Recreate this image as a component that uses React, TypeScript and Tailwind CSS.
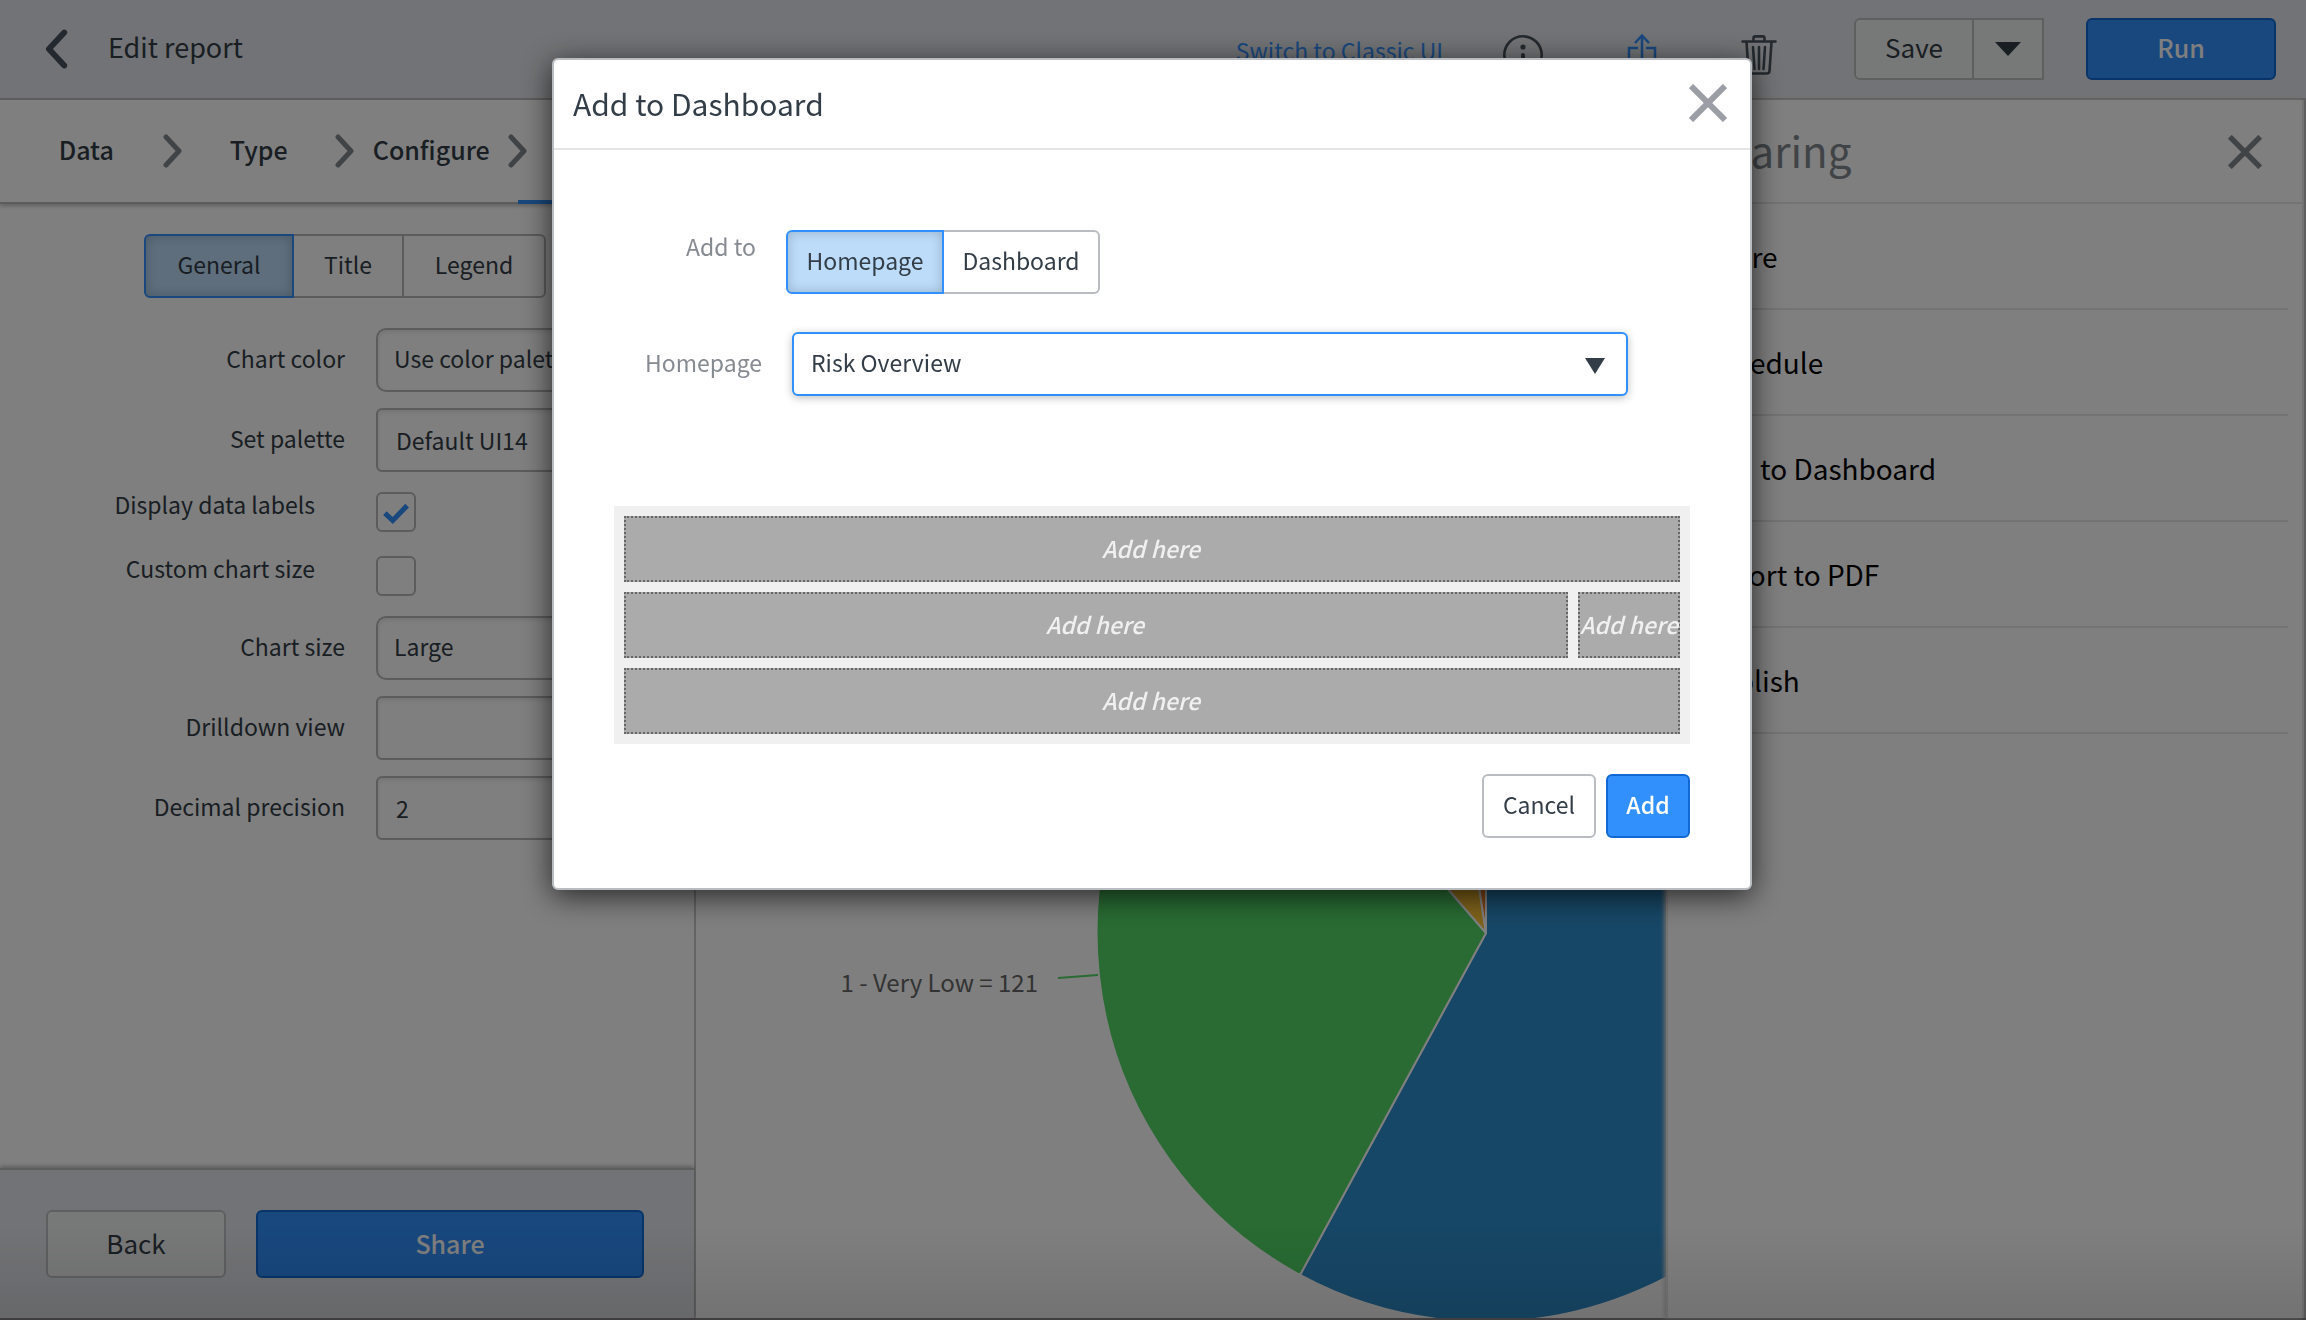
import React from "react";

function Chevron({ dir, className }: { dir: "left" | "right"; className: string }) {
  return (
    <svg viewBox="0 0 20 34" className={className} fill="none" stroke="currentColor" strokeWidth="5" strokeLinecap="round" strokeLinejoin="round" aria-hidden="true">
      <path d={dir === "left" ? "M17 3L4 17l13 14" : "M3 3l13 14L3 31"} />
    </svg>
  );
}

function Cross({ className }: { className: string }) {
  return (
    <svg viewBox="0 0 38 38" className={className} fill="none" stroke="currentColor" strokeWidth="6" aria-hidden="true">
      <path d="M2 2l34 34M36 2L2 36" />
    </svg>
  );
}

function Header() {
  return (
    <header className="flex h-[100px] shrink-0 items-center border-b-2 border-[#bebebe] bg-[#e5e7ec] pr-[30px] pl-11">
      <button aria-label="Go back" className="text-[#48535e]">
        <Chevron dir="left" className="h-10 w-6" />
      </button>
      <h1 className="ml-10 flex-1 pb-1 text-[27px]">Edit report</h1>
      <a href="#classic" className="pt-0.5 text-[#3290fc]">Switch to Classic UI</a>
      <button aria-label="Information" className="mt-3 ml-[60px] text-[#48535e]">
        <svg viewBox="0 0 40 40" className="size-10" fill="none" stroke="currentColor" strokeWidth="2.6">
          <circle cx="20" cy="20" r="18.7" />
          <circle cx="20" cy="12" r="2.600" fill="currentColor" stroke="none" />
          <path d="M20 20v11" strokeWidth="4" strokeLinecap="round" />
        </svg>
      </button>
      <button aria-label="Share" className="mt-2 ml-[84px] text-[#3290fc]">
        <svg viewBox="0 0 30 38" className="h-[38px] w-[30px]" fill="none" stroke="currentColor" strokeWidth="2.500">
          <path d="M11 14H2v22h26V14h-9M15 24V2M8 9l7-7.500L22 9" />
        </svg>
      </button>
      <button aria-label="Delete" className="mt-3 ml-[84px] text-[#48535e]">
        <svg viewBox="0 0 36 40" className="h-10 w-9" fill="none" stroke="currentColor" strokeWidth="2.600" strokeLinecap="round">
          <path d="M1.500 6.500h33M12.500 6V3.200c0-1 .8-1.800 1.800-1.800h7.400c1 0 1.800.8 1.800 1.800V6M5.500 7l2 29c.1 1.600 1.200 2.500 2.600 2.500h15.800c1.400 0 2.500-.9 2.600-2.500l2-29" />
          <path d="M12 12l1.500 22M18 12v22M24 12l-1.500 22" />
        </svg>
      </button>
      <div className="ml-[77px] flex h-[62px] w-[190px] rounded-l-md border-2 border-[#bebfc1] bg-[#eff1f0]">
        <button className="flex-1 border-r-2 border-[#bebfc1] pb-1 text-[26px]">Save</button>
        <button aria-label="More save options" className="flex w-[68px] items-center justify-center">
          <svg viewBox="0 0 26 14" className="h-3.5 w-[26px]" fill="currentColor"><path d="M0 0h26L13 14z" /></svg>
        </button>
      </div>
      <button className="ml-[42px] h-[62px] w-[190px] rounded-md border-2 border-[#1269d3] bg-[#3290fc] pb-1 text-[25px] font-medium text-white">Run</button>
    </header>
  );
}

const steps = ["Data", "Type", "Configure", "Style"];

function Steps() {
  return (
    <nav className="z-10 flex h-[104px] shrink-0 items-stretch border-b-2 border-[#b8b8b8] pr-1 text-[25px] font-medium shadow-[0_2px_4px_rgba(0,0,0,0.25)]">
      {steps.map((s, i) => (
        <React.Fragment key={s}>
          {i > 0 && (
            <span className="z-10 -mx-2.5 flex w-5 items-center text-[#82888e]">
              <Chevron dir="right" className="h-[34px] w-5" />
            </span>
          )}
          <a href={"#" + s.toLowerCase()} className={i === 3 ? "-mb-0.5 flex flex-1 items-center justify-center border-b-4 border-[#3290fc]" : "flex flex-1 items-center justify-center pb-1"}>
            {s}
          </a>
        </React.Fragment>
      ))}
    </nav>
  );
}

type FieldProps = { id: string; label: string; value: string; round?: boolean };

function Field({ id, label, value, round }: FieldProps) {
  return (
    <div className="mb-4 flex h-16 items-center">
      <label htmlFor={id} className="w-[345px] pb-1 text-right">{label}</label>
      <select id={id} defaultValue={value} className={"ml-[31px] h-16 w-[260px] appearance-none border-2 border-[#b8b8b8] bg-white shadow-[inset_0_2px_4px_rgba(0,0,0,0.1)] " + (round ? "rounded-[10px] px-4 pb-1" : "rounded-md px-[18px]")}>
        <option>{value}</option>
      </select>
    </div>
  );
}

function CheckField({ id, label, checked }: { id: string; label: string; checked: boolean }) {
  return (
    <div className="flex h-16 items-start pt-1">
      <label htmlFor={id} className="w-[315px] text-right leading-6">{label}</label>
      <span className="relative ml-[61px] size-10">
        <input id={id} type="checkbox" defaultChecked={checked} className="peer size-10 appearance-none rounded-md border-2 border-[#b8b8b8] bg-white" />
        <svg viewBox="0 0 28 22" className="pointer-events-none absolute inset-x-[7px] top-[11px] hidden h-[22px] w-[26px] peer-checked:block" fill="none" stroke="#3290fc" strokeWidth="5.500">
          <path d="M2 10l8.500 8L26 2" />
        </svg>
      </span>
    </div>
  );
}

function Sidebar() {
  return (
    <aside className="flex w-[696px] shrink-0 flex-col border-r-2 border-[#c8c8c8] bg-white">
      <Steps />
      <div className="flex-1">
        <div className="mt-[30px] ml-36 flex h-16 w-[402px]">
          <button aria-pressed="true" className="w-[150px] rounded-l-md border-2 border-[#3290fc] bg-[#bcdcfa] pb-1 shadow-[inset_0_0_12px_rgba(0,0,0,0.2)]">General</button>
          <button className="w-[108px] border-y-2 border-[#b8b8b8] pb-1">Title</button>
          <button className="flex-1 rounded-r-md border-2 border-[#b8b8b8] pb-1">Legend</button>
        </div>
        <form className="pt-[30px]">
          <Field id="chart-color" label="Chart color" value="Use color palette" round />
          <Field id="palette" label="Set palette" value="Default UI14" />
          <CheckField id="data-labels" label="Display data labels" checked />
          <CheckField id="custom-size" label="Custom chart size" checked={false} />
          <Field id="chart-size" label="Chart size" value="Large" round />
          <Field id="drilldown" label="Drilldown view" value="" />
          <Field id="precision" label="Decimal precision" value="2" />
        </form>
      </div>
      <div className="flex h-[150px] items-center gap-[30px] border-t-2 border-[#bababa] bg-[#e5e7ec] pr-[50px] pl-[46px] text-[26px] shadow-[0_-2px_4px_rgba(0,0,0,0.25)]">
        <button className="h-[68px] w-[180px] rounded-md border-2 border-[#bebfc1] bg-[#eff1f0] pb-0.5">Back</button>
        <button className="h-[68px] flex-1 rounded-md border-2 border-[#1269d3] bg-[#3290fc] pb-0.5 text-[25px] font-medium text-white">Share</button>
      </div>
    </aside>
  );
}

function Chart() {
  return (
    <main className="min-w-0 flex-1 overflow-hidden bg-white">
      <svg viewBox="0 0 970 1218" preserveAspectRatio="xMidYMin slice" className="h-full w-full" role="img" aria-label="Risk pie chart">
        <g stroke="#fff" strokeWidth="2" strokeLinejoin="round">
          <path d="M790 833V444A389 389 0 1 1 604 1175z" fill="#2e8ecc" />
          <path d="M790 833L604 1175A389 389 0 0 1 535 539z" fill="#52d666" />
          <path d="M790 833L535 539A389 389 0 0 1 732 448z" fill="#fec436" />
          <path d="M790 833L732 448A389 389 0 0 1 790 444z" fill="#fe8828" />
        </g>
        <path d="M362 878l40-3" stroke="#52d666" strokeWidth="2" />
        <text x="342" y="892" textAnchor="end" fontSize="24" fill="#666">1 - Very Low = 121</text>
      </svg>
    </main>
  );
}

const actions = ["Share", "Schedule", "Add to Dashboard", "Export to PDF", "Publish"];

function Sharing() {
  return (
    <aside className="z-10 mr-0.5 flex w-[638px] shrink-0 flex-col border-x-2 border-[#e6e6e6] bg-white shadow-[-2px_0_4px_#d8d8d8]">
      <div className="flex h-[104px] items-center justify-between border-b-2 border-[#e6e6e6] pt-0.5 pr-10 pl-8 text-[#82888e]">
        <h2 className="pb-1 text-[42px]">Sharing</h2>
        <button aria-label="Close sharing"><Cross className="size-[34px]" /></button>
      </div>
      <ul className="mr-3.5 ml-4 text-[28px] text-black">
        {actions.map((a) => (
          <li key={a} className="h-[106px] border-b-2 border-[#e6e6e6]">
            <button className="h-full w-full pl-[18px] text-left">{a}</button>
          </li>
        ))}
      </ul>
    </aside>
  );
}

function Slot({ className }: { className: string }) {
  return (
    <button className={"h-[66px] border-2 border-dotted border-[#666] bg-[#ababab] pr-0.5 pb-0.5 font-medium whitespace-nowrap text-[#f0f0f0] italic " + className}>
      Add here
    </button>
  );
}

function Modal() {
  return (
    <div role="dialog" aria-label="Add to Dashboard" className="w-full max-w-[1200px] rounded-md border-2 border-[#b9bdc2] bg-white shadow-[0_6px_30px_rgba(0,0,0,0.7)]">
      <div className="flex h-[90px] items-center justify-between border-b-2 border-[#e4e5e7] pr-[23px] pl-[19px]">
        <h2 className="pb-0.5 text-[30px]">Add to Dashboard</h2>
        <button aria-label="Close" className="pb-0.5 text-[#9b9fa5]"><Cross className="size-[38px]" /></button>
      </div>
      <div className="px-[60px] pt-20 pb-[50px]">
        <div className="flex h-16">
          <span className="mt-1 w-[142px] text-right leading-6 text-[#868b92]">Add to</span>
          <div className="ml-[30px] flex">
            <button aria-pressed="true" className="w-[158px] rounded-l-md border-2 border-[#3290fc] bg-[#bcdcfa] pb-1 shadow-[inset_0_0_12px_rgba(0,0,0,0.2)]">Homepage</button>
            <button className="w-[156px] rounded-r-md border-2 border-l-0 border-[#b9bdc2] pb-1">Dashboard</button>
          </div>
        </div>
        <div className="mt-[38px] flex h-16 items-center">
          <label htmlFor="homepage" className="w-[148px] pb-1 text-right text-[#868b92]">Homepage</label>
          <div className="relative mr-[62px] ml-[30px] flex-1">
            <select id="homepage" className="h-16 w-full appearance-none rounded-md border-2 border-[#3290fc] bg-white px-[17px] pb-1 shadow-[0_2px_8px_rgba(0,0,0,0.25)]">
              <option>Risk Overview</option>
            </select>
            <svg viewBox="0 0 20 16" className="pointer-events-none absolute top-[26px] right-[23px] h-4 w-5" fill="currentColor"><path d="M0 0h20L10 16z" /></svg>
          </div>
        </div>
        <div className="mt-[110px] flex flex-col gap-2.5 bg-[#f0f0f0] p-2.5">
          <Slot className="w-full" />
          <div className="flex gap-2.5">
            <Slot className="flex-1" />
            <Slot className="w-[102px]" />
          </div>
          <Slot className="w-full" />
        </div>
        <div className="mt-[30px] flex justify-end gap-2.5">
          <button className="h-16 w-[114px] rounded-md border-2 border-[#b9bdc2] pb-1">Cancel</button>
          <button className="h-16 w-[84px] rounded-md border-2 border-[#1269d3] bg-[#3290fc] pb-1 font-medium text-white">Add</button>
        </div>
      </div>
    </div>
  );
}

export default function App() {
  return (
    <div className="flex h-screen flex-col border-b-2 border-[#8e8a8e] bg-[#bebebe] font-['Noto_Sans_CJK_SC',sans-serif] text-[23px] leading-8 text-[#333d47]">
      <Header />
      <div className="flex min-h-0 flex-1">
        <Sidebar />
        <Chart />
        <Sharing />
      </div>
      <div className="pointer-events-none fixed inset-x-0 bottom-0 z-20 h-24 bg-linear-to-b from-transparent to-black/10" />
      <div className="fixed inset-0 z-30 flex items-start justify-center bg-black/50 pt-[58px] pr-0.5">
        <Modal />
      </div>
    </div>
  );
}
